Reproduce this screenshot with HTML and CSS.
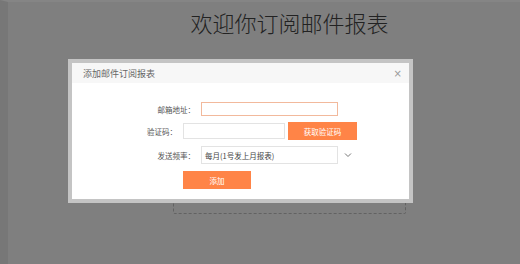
FILE: index.html
```html
<!DOCTYPE html>
<html lang="zh-CN">
<head>
<meta charset="utf-8">
<title>邮件订阅</title>
<link rel="stylesheet" href="styles.css">
</head>
<body>
<div class="page">
  <div class="content">
    <h1 class="title">欢迎你订阅邮件报表</h1>
    <div class="dashed-box"></div>
  </div>
</div>

<div class="dialog">
  <div class="dialog-inner">
    <div class="dialog-header">
      <span class="dialog-title">添加邮件订阅报表</span>
      <span class="dialog-close">×</span>
    </div>
    <div class="dialog-body">
      <div class="row row-email">
        <label class="label label-wide">邮箱地址：</label>
        <div class="input input-focus"></div>
      </div>
      <div class="row row-code">
        <label class="label label-narrow">验证码：</label>
        <div class="input input-code"></div>
        <button class="btn btn-code">获取验证码</button>
      </div>
      <div class="row row-freq">
        <label class="label label-wide">发送频率：</label>
        <div class="input select">每月(1号发上月报表)</div>
        <svg class="chevron" width="8" height="6" viewBox="0 0 8 6"><path d="M1 1.5 L4 4.5 L7 1.5" fill="none" stroke="#777" stroke-width="1"/></svg>
      </div>
      <div class="row row-submit">
        <span class="spacer"></span>
        <button class="btn btn-add">添加</button>
      </div>
    </div>
  </div>
</div>
</body>
</html>
```
FILE: styles.css
```css
html, body {
  margin: 0;
  padding: 0;
}
body {
  background: #7f7f7f;
  font-family: "Noto Sans CJK SC", "Noto Sans", sans-serif;
  width: 520px;
  height: 264px;
  overflow: hidden;
  position: relative;
}
.page {
  height: 264px;
  border-left: 8px solid #777777;
  border-top: 2px solid #858585;
  box-sizing: border-box;
  padding-left: 165px;
}
.content {
  width: 233px;
}
.title {
  margin: 0;
  padding-top: 5px;
  font-size: 22px;
  line-height: 30px;
  font-weight: 300;
  color: #222;
  text-align: center;
}
.dashed-box {
  margin-top: 40px;
  height: 135px;
  border: 1px dashed #626262;
  border-radius: 2px;
}

.dialog {
  position: absolute;
  left: 68px;
  top: 59px;
  width: 337px;
  border: 4px solid #c4c4c4;
}
.dialog-inner {
  background: #ffffff;
  height: 136px;
  display: flex;
  flex-direction: column;
}
.dialog-header {
  height: 20px;
  background: #f7f7f7;
  display: flex;
  align-items: center;
  justify-content: space-between;
  padding: 0 7px 0 11px;
}
.dialog-title {
  font-size: 9px;
  color: #666;
}
.dialog-close {
  font-size: 10px;
  color: #9a9a9a;
  font-family: "DejaVu Sans", sans-serif;
}
.dialog-body {
  display: flex;
  flex-direction: column;
  gap: 6px;
  padding-top: 19px;
}
.row {
  display: flex;
  align-items: center;
}
.label {
  font-size: 7.5px;
  color: #555;
  text-align: right;
  box-sizing: border-box;
  white-space: nowrap;
}
.label-wide {
  width: 123px;
  margin-right: 6px;
}
.label-narrow {
  width: 105px;
  margin-right: 6px;
}
.input {
  box-sizing: border-box;
  border: 1px solid #e3e3e3;
  background: #fff;
  width: 137px;
  height: 18px;
}
.input-focus {
  border-color: #f2b99c;
  height: 14px;
}
.input-code {
  width: 102px;
  height: 16px;
}
.select {
  font-size: 7.5px;
  color: #444;
  display: flex;
  align-items: center;
  padding-left: 3px;
}
.chevron {
  margin-left: 6px;
}
.btn {
  border: none;
  background: #ff8447;
  color: #fff;
  font-family: "Noto Sans CJK SC", "Noto Sans", sans-serif;
  font-size: 7.5px;
  height: 18px;
  padding: 0;
  display: flex;
  align-items: center;
  justify-content: center;
}
.btn-code {
  width: 69px;
  margin-left: 3px;
}
.row-submit {
  margin-top: 1px;
}
.spacer {
  width: 111px;
}
.btn-add {
  width: 68px;
}
```
